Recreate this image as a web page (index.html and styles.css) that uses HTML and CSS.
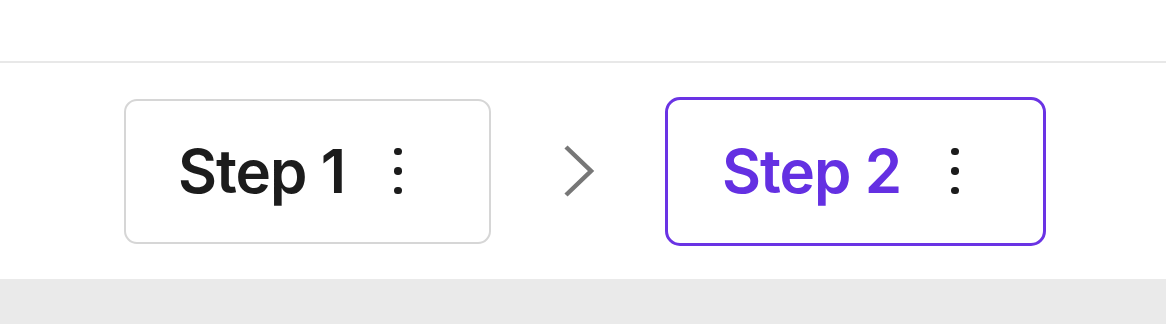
FILE: index.html
```html
<!DOCTYPE html>
<html>
<head>
<meta charset="utf-8">
<link rel="stylesheet" href="styles.css">
</head>
<body>
  <div class="top"></div>
  <div class="steps">
    <div class="step">
      <span class="label">Step 1</span>
      <span class="kebab"><i></i><i></i><i></i></span>
    </div>
    <svg class="chev" width="32" height="54" viewBox="0 0 32 54">
      <path d="M3 3 L28 27 L3 51" fill="none" stroke="#777777" stroke-width="4.5"/>
    </svg>
    <div class="step active">
      <span class="label">Step 2</span>
      <span class="kebab"><i></i><i></i><i></i></span>
    </div>
  </div>
  <div class="bottom"></div>
</body>
</html>
```
FILE: styles.css
```css
html, body {
  margin: 0;
  padding: 0;
  background: #ffffff;
}
body {
  width: 1166px;
  height: 324px;
  display: flex;
  flex-direction: column;
  font-family: Inter, "Liberation Sans", sans-serif;
  overflow: hidden;
}
.top {
  height: 61px;
  border-bottom: 2px solid #e8e8e8;
  flex: none;
}
.steps {
  flex: 1;
  display: flex;
  align-items: center;
  justify-content: center;
  gap: 72px;
  padding-left: 4px;
}
.bottom {
  height: 45px;
  background: #eaeaea;
  flex: none;
}
.step {
  box-sizing: border-box;
  width: 367px;
  height: 145px;
  border: 2px solid #d6d6d6;
  border-radius: 13px;
  display: flex;
  align-items: center;
  padding: 0 0 0 52px;
  color: #1c1c1c;
  flex: none;
}
.step.active {
  width: 381px;
  height: 149px;
  border: 3px solid #6a33e4;
  border-radius: 15px;
  color: #6430e2;
  padding: 0 0 0 54px;
}
.label {
  font-size: 60px;
  font-weight: 600;
  letter-spacing: -1px;
  line-height: 1;
}
.kebab {
  margin-left: 49px;
  display: flex;
  flex-direction: column;
  gap: 12px;
  width: 8px;
}
.step.active .kebab {
  margin-left: 50px;
}
.kebab i {
  display: block;
  width: 7.5px;
  height: 7.5px;
  border-radius: 50%;
  background: #1c1c1c;
}
.chev {
  display: block;
  flex: none;
  margin-right: -2px;
}
```
